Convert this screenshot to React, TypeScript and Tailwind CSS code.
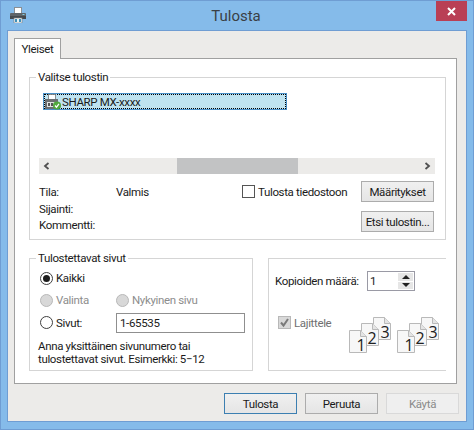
const font = { fontFamily: 'Roboto, "Open Sans", sans-serif' };

function PrinterIcon() {
  return (
    <svg width="16" height="16" viewBox="0 0 16 16" className="shrink-0">
      <rect x="4.500" y="0.500" width="7" height="6" fill="#fff" stroke="#8a8f94" />
      <path d="M1 6h14a1 1 0 0 1 1 1v5H0V7a1 1 0 0 1 1-1z" fill="#5f6469" />
      <rect x="0" y="9" width="16" height="3" fill="#44494e" />
      <rect x="12.500" y="7" width="2" height="1" fill="#7fd0e8" />
      <rect x="4" y="11" width="8" height="5" fill="#fff" stroke="#7d8388" strokeWidth="0.7" />
      <rect x="5" y="12" width="6" height="3" fill="#3d8fb8" />
      <rect x="7" y="12" width="2" height="3" fill="#e6f4f8" />
    </svg>
  );
}

function SmallPrinter() {
  return (
    <svg width="16" height="16" viewBox="0 0 16 16" className="shrink-0">
      <rect x="3.500" y="0.500" width="7" height="5" fill="#fff" stroke="#777" strokeWidth="0.8" />
      <rect x="0" y="5" width="13" height="10" fill="#6b6e70" />
      <rect x="2" y="8" width="8" height="5" fill="#dfe3e4" />
      <rect x="3" y="9" width="2" height="3" fill="#555" />
      <rect x="6" y="9" width="2" height="3" fill="#555" />
      <circle cx="12" cy="11.500" r="4" fill="#4fa83d" />
      <path d="M10 11.500l1.500 1.700 2.500-3.400" fill="none" stroke="#fff" strokeWidth="1.200" />
    </svg>
  );
}

function Radio({ checked, disabled }: { checked?: boolean; disabled?: boolean }) {
  return (
    <span
      className={`flex h-[13px] w-[13px] shrink-0 items-center justify-center rounded-full border ${
        disabled ? "border-[#b8b8b8] bg-[#d8d8d8]" : "border-[#3f3f3f] bg-white"
      }`}
    >
      {checked && <span className="h-[7px] w-[7px] rounded-full bg-[#1c1c1c]" />}
    </span>
  );
}

function Button({ children, primary, disabled }: { children: React.ReactNode; primary?: boolean; disabled?: boolean }) {
  let tone = "border-[#acacac] bg-gradient-to-b from-[#f0f0f0] to-[#e5e5e5] text-[#1a1a1a]";
  if (primary) tone = "border-[#3c7fb1] bg-gradient-to-b from-[#f0f0f0] to-[#e5e5e5] text-[#1a1a1a]";
  if (disabled) tone = "border-[#d9d9d9] bg-[#efefef] text-[#8a8a8a]";
  return (
    <button type="button" className={`flex h-[21px] w-[73px] items-center justify-center whitespace-nowrap border ${tone}`}>
      {children}
    </button>
  );
}

function Chevron({ left }: { left?: boolean }) {
  return (
    <svg width="8" height="8" viewBox="0 0 8 8">
      <path d={left ? "M5.500 1L2 4l3.500 3" : "M2.500 1L6 4 2.500 7"} fill="none" stroke="#505050" strokeWidth="1.800" />
    </svg>
  );
}

function Page({ x, y, label, tx, ty }: { x: number; y: number; label: string; tx: number; ty: number }) {
  return (
    <g>
      <path d={`M${x + 0.5} ${y + 0.5}h11l6 6v16h-17z`} fill="#f7f7f7" stroke="#b9b9b9" />
      <path d={`M${x + 11.500} ${y + 0.5}v6h6`} fill="#e4e4e4" stroke="#b9b9b9" />
      <text x={tx} y={ty} fontSize="16" fill="#222" textAnchor="middle" fontFamily="Open Sans, sans-serif">
        {label}
      </text>
    </g>
  );
}

function CollateIcon() {
  return (
    <svg width="44" height="42" viewBox="0 0 44 42" className="shrink-0">
      <Page x={25} y={0} label="3" tx={37} ty={21} />
      <Page x={13} y={6} label="2" tx={24} ty={27} />
      <Page x={1} y={13} label="1" tx={13} ty={34} />
    </svg>
  );
}

export default function App() {
  return (
    <div style={font} className="flex h-[430px] w-[474px] flex-col border border-[#6f9dd3] bg-[#85bbea] text-[11.5px] leading-[16px] tracking-[-0.35px] text-[#1a1a1a]">
      {/* Title bar */}
      <div className="flex h-[29px] shrink-0 items-start">
        <div className="ml-[9px] mt-[6px]">
          <PrinterIcon />
        </div>
        <div className="flex-1 pt-[5px] pl-[10px] text-center text-[15px] leading-[20px] tracking-normal text-[#3a3f45]">Tulosta</div>
        <div className="mr-[6px] flex h-[20px] w-[31px] items-center justify-center bg-[#b93f55]">
          <svg width="9" height="9" viewBox="0 0 9 9">
            <path d="M1 1l7 7M8 1L1 8" stroke="#fff" strokeWidth="2" />
          </svg>
        </div>
      </div>

      {/* Client area */}
      <div className="ml-[6px] mr-[6px] h-[392px] border border-[#6f9dd3] bg-[#ecebe9] pl-[6px] pt-[7px]">
        <div className="relative z-10 -mb-px flex h-[21px] w-[47px] items-center justify-center border border-b-0 border-[#a0a0a0] bg-white">
          Yleiset
        </div>
        <div className="h-[326px] w-[443px] border border-[#a0a0a0] bg-white pl-[14px] pt-[10px]">
          {/* Printer selection */}
          <fieldset className="h-[171px] w-[417px] border border-[#d5d5d5]">
            <legend className="ml-[6px] px-[2px]">Valitse tulostin</legend>
            <div className="ml-[13px] mt-[8px] h-[17px] w-[244px] border border-[#4a90c8] bg-[#bfe3f0]">
              <div className="flex h-[15px] items-center border border-dotted border-black">
                <SmallPrinter />
                <span className="ml-[1px] whitespace-nowrap">SHARP MX-xxxx</span>
              </div>
            </div>
            <div className="ml-[9px] mt-[48px] flex h-[16px] w-[396px] items-center bg-[#ecebe9]">
              <div className="flex w-[16px] justify-center">
                <Chevron left />
              </div>
              <div className="ml-[122px] h-[16px] w-[121px] bg-[#c2c3c4]" />
              <div className="flex flex-1 justify-end pr-[4px]">
                <Chevron />
              </div>
            </div>
            <div className="mt-[7px] flex pl-[9px]">
              <div className="grid h-[53px] w-[203px] grid-cols-[77px_1fr] grid-rows-[21px_13px_19px] items-center">
                <span>Tila:</span>
                <span>Valmis</span>
                <span className="col-span-2">Sijainti:</span>
                <span className="col-span-2">Kommentti:</span>
              </div>
              <div className="flex h-[21px] w-[119px] items-center">
                <span className="h-[13px] w-[13px] shrink-0 border border-[#555] bg-white" />
                <span className="ml-[3px] whitespace-nowrap">Tulosta tiedostoon</span>
              </div>
              <div className="flex flex-col gap-[9px]">
                <Button>Määritykset</Button>
                <Button>Etsi tulostin...</Button>
              </div>
            </div>
          </fieldset>

          <div className="mt-[10px] flex gap-[15px]">
            {/* Page range */}
            <fieldset className="h-[121px] w-[224px] border border-[#d5d5d5]">
              <legend className="ml-[6px] px-[2px]">Tulostettavat sivut</legend>
              <div className="mt-[1px] flex h-[22px] items-center gap-[3px] pl-[10px]">
                <Radio checked />
                <span>Kaikki</span>
              </div>
              <div className="flex h-[22px] items-center pl-[10px] text-[#8d8d8d]">
                <Radio disabled />
                <span className="ml-[3px] w-[60px]">Valinta</span>
                <Radio disabled />
                <span className="ml-[3px]">Nykyinen sivu</span>
              </div>
              <div className="flex h-[23px] items-center pl-[10px]">
                <Radio />
                <span className="ml-[3px] w-[60px]">Sivut:</span>
                <div className="flex h-[20px] w-[129px] items-center border border-[#8f8f8f] pl-[3px]">1-65535</div>
              </div>
              <div className="mt-[6px] pl-[8px] leading-[13px]">
                <div>Anna yksittäinen sivunumero tai</div>
                <div>tulostettavat sivut. Esimerkki: 5−12</div>
              </div>
            </fieldset>

            {/* Copies */}
            <fieldset className="h-[121px] w-[178px] border border-r-0 border-[#d5d5d5]">
              <legend className="h-[16px]" />
              <div className="mt-[5px] flex h-[20px] items-center pl-[6px]">
                <span className="w-[92px] whitespace-nowrap">Kopioiden määrä:</span>
                <div className="flex h-[20px] w-[48px] items-center justify-between border border-[#9a9aa5] pl-[2px] pr-[1px]">
                  <span>1</span>
                  <div className="flex h-[16px] w-[15px] flex-col gap-px">
                    <div className="flex flex-1 items-center justify-center bg-[#e6e6e6]">
                      <span className="border-x-[4px] border-b-[4px] border-x-transparent border-b-[#222]" />
                    </div>
                    <div className="flex flex-1 items-center justify-center bg-[#e6e6e6]">
                      <span className="border-x-[4px] border-t-[4px] border-x-transparent border-t-[#222]" />
                    </div>
                  </div>
                </div>
              </div>
              <div className="mt-[26px] flex pl-[9px]">
                <div className="mt-[-1px] flex h-[13px] w-[70px] items-center">
                  <span className="flex h-[13px] w-[13px] shrink-0 items-center justify-center border border-[#b8b8b8] bg-[#d9d9d9]">
                    <svg width="11" height="11" viewBox="0 0 11 11">
                      <path d="M2 5.500l2.500 3L9 2" fill="none" stroke="#7a7a7a" strokeWidth="2" />
                    </svg>
                  </span>
                  <span className="ml-[3px] text-[#6f6f6f]">Lajittele</span>
                </div>
                <div className="flex gap-[4px]">
                  <CollateIcon />
                  <CollateIcon />
                </div>
              </div>
            </fieldset>
          </div>
        </div>

        {/* Bottom buttons */}
        <div className="mt-[9px] flex w-[445px] justify-end gap-[8px]">
          <Button primary>Tulosta</Button>
          <Button>Peruuta</Button>
          <Button disabled>Käytä</Button>
        </div>
      </div>
    </div>
  );
}
